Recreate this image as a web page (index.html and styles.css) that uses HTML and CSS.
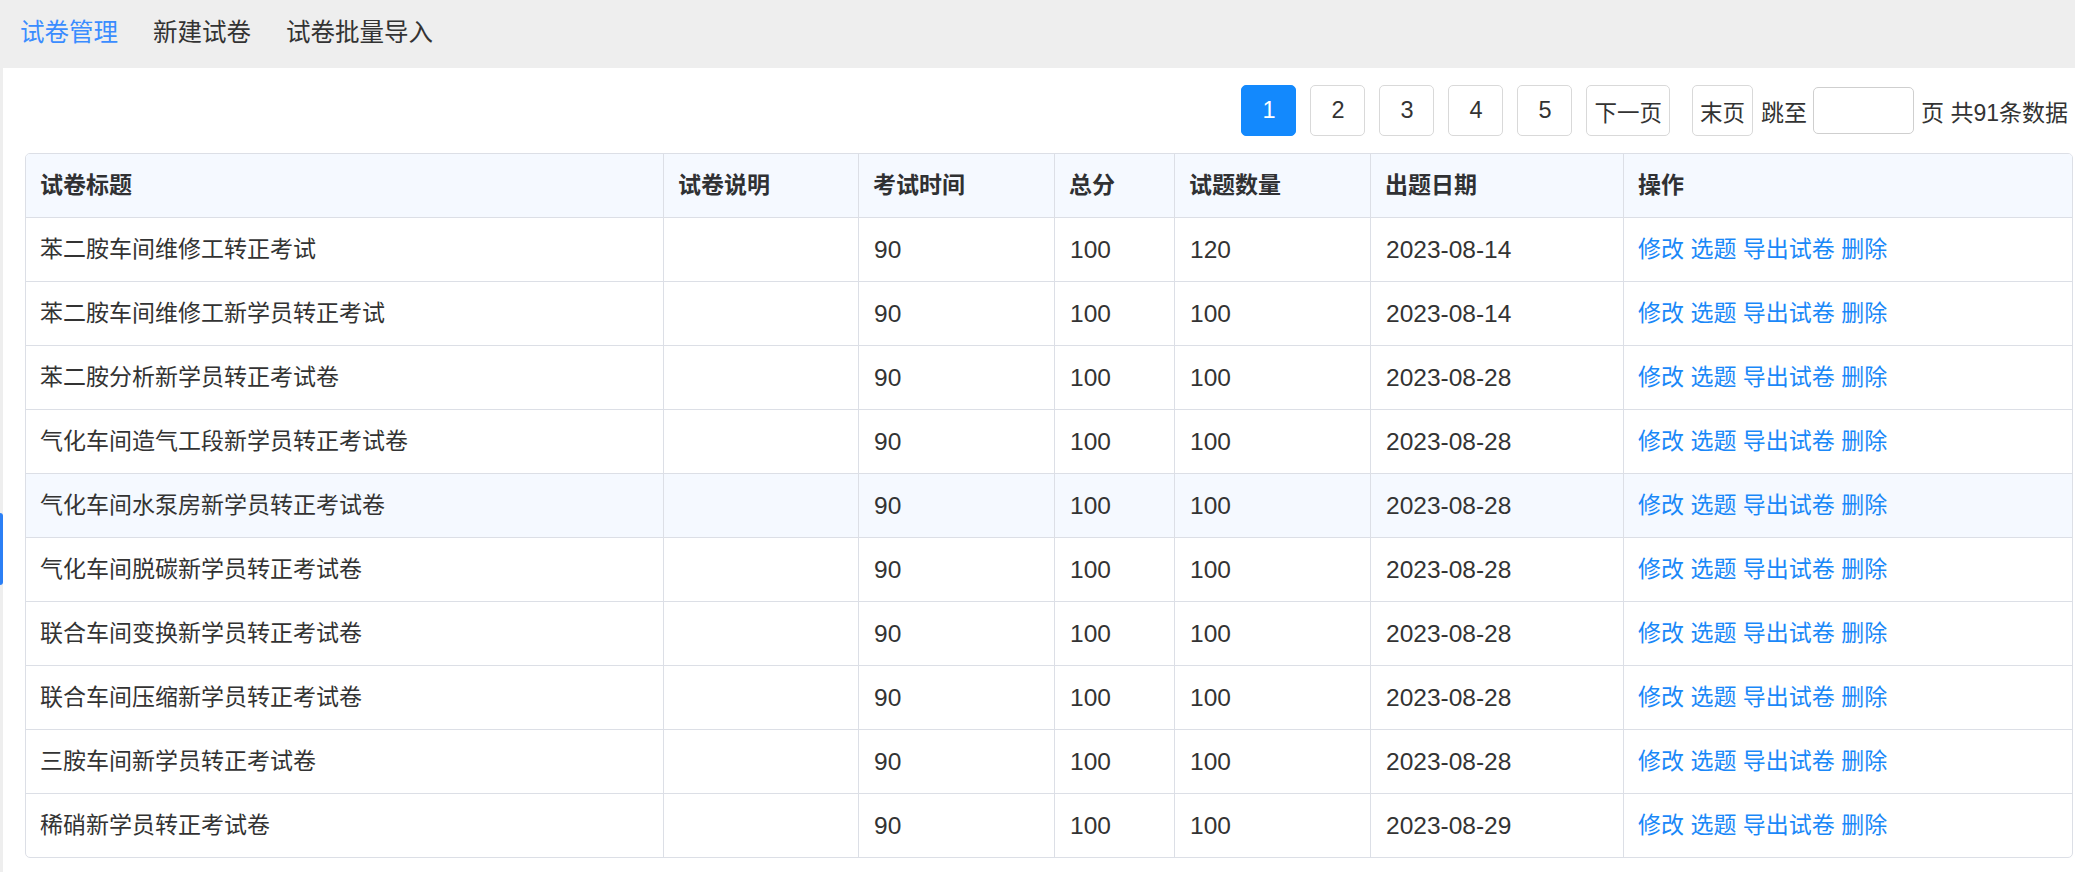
FILE: index.html
```html
<!DOCTYPE html>
<html lang="zh-CN">
<head>
<meta charset="utf-8">
<title>试卷管理</title>
<link rel="stylesheet" href="styles.css">
</head>
<body>
<div class="topbar">
  <a class="nav-item active">试卷管理</a>
  <a class="nav-item">新建试卷</a>
  <a class="nav-item">试卷批量导入</a>
</div>
<div class="side-tab"></div>
<div class="main">
  <div class="pager">
    <span class="pbtn num current">1</span>
    <span class="pbtn num">2</span>
    <span class="pbtn num">3</span>
    <span class="pbtn num">4</span>
    <span class="pbtn num">5</span>
    <span class="pbtn txt">下一页</span>
    <span class="pbtn txt last">末页</span>
    <span class="plabel">跳至</span>
    <input class="pinput" type="text">
    <span class="ptotal">页 共91条数据</span>
  </div>
  <div class="table-wrap">
    <table class="grid">
      <colgroup>
        <col class="c1"><col class="c2"><col class="c3"><col class="c4"><col class="c5"><col class="c6"><col class="c7">
      </colgroup>
      <thead>
        <tr><th>试卷标题</th><th>试卷说明</th><th>考试时间</th><th>总分</th><th>试题数量</th><th>出题日期</th><th>操作</th></tr>
      </thead>
      <tbody>
        <tr><td>苯二胺车间维修工转正考试</td><td></td><td class="n">90</td><td class="n">100</td><td class="n">120</td><td class="n">2023-08-14</td><td class="ops"><a>修改</a> <a>选题</a> <a>导出试卷</a> <a>删除</a></td></tr>
        <tr><td>苯二胺车间维修工新学员转正考试</td><td></td><td class="n">90</td><td class="n">100</td><td class="n">100</td><td class="n">2023-08-14</td><td class="ops"><a>修改</a> <a>选题</a> <a>导出试卷</a> <a>删除</a></td></tr>
        <tr><td>苯二胺分析新学员转正考试卷</td><td></td><td class="n">90</td><td class="n">100</td><td class="n">100</td><td class="n">2023-08-28</td><td class="ops"><a>修改</a> <a>选题</a> <a>导出试卷</a> <a>删除</a></td></tr>
        <tr><td>气化车间造气工段新学员转正考试卷</td><td></td><td class="n">90</td><td class="n">100</td><td class="n">100</td><td class="n">2023-08-28</td><td class="ops"><a>修改</a> <a>选题</a> <a>导出试卷</a> <a>删除</a></td></tr>
        <tr class="hover"><td>气化车间水泵房新学员转正考试卷</td><td></td><td class="n">90</td><td class="n">100</td><td class="n">100</td><td class="n">2023-08-28</td><td class="ops"><a>修改</a> <a>选题</a> <a>导出试卷</a> <a>删除</a></td></tr>
        <tr><td>气化车间脱碳新学员转正考试卷</td><td></td><td class="n">90</td><td class="n">100</td><td class="n">100</td><td class="n">2023-08-28</td><td class="ops"><a>修改</a> <a>选题</a> <a>导出试卷</a> <a>删除</a></td></tr>
        <tr><td>联合车间变换新学员转正考试卷</td><td></td><td class="n">90</td><td class="n">100</td><td class="n">100</td><td class="n">2023-08-28</td><td class="ops"><a>修改</a> <a>选题</a> <a>导出试卷</a> <a>删除</a></td></tr>
        <tr><td>联合车间压缩新学员转正考试卷</td><td></td><td class="n">90</td><td class="n">100</td><td class="n">100</td><td class="n">2023-08-28</td><td class="ops"><a>修改</a> <a>选题</a> <a>导出试卷</a> <a>删除</a></td></tr>
        <tr><td>三胺车间新学员转正考试卷</td><td></td><td class="n">90</td><td class="n">100</td><td class="n">100</td><td class="n">2023-08-28</td><td class="ops"><a>修改</a> <a>选题</a> <a>导出试卷</a> <a>删除</a></td></tr>
        <tr><td>稀硝新学员转正考试卷</td><td></td><td class="n">90</td><td class="n">100</td><td class="n">100</td><td class="n">2023-08-29</td><td class="ops"><a>修改</a> <a>选题</a> <a>导出试卷</a> <a>删除</a></td></tr>
      </tbody>
    </table>
  </div>
</div>
</body>
</html>
```

FILE: styles.css
```css
html, body {
  margin: 0;
  padding: 0;
  height: 100%;
  overflow: hidden;
}
body {
  background: #eeeeee;
  font-family: "Liberation Sans", "Noto Sans CJK SC", sans-serif;
  color: #333333;
  font-size: 23px;
}
.topbar {
  height: 68px;
  background: #eeeeee;
  display: flex;
  align-items: center;
  padding-left: 20px;
  box-sizing: border-box;
}
.nav-item {
  font-size: 24.5px;
  line-height: 1;
  color: #333333;
  margin-right: 35px;
  padding-bottom: 1px;
  cursor: pointer;
}
.nav-item.active {
  color: #3a8cff;
}
.side-tab {
  position: absolute;
  left: 0;
  top: 513px;
  width: 3px;
  height: 72px;
  background: #2b7ff5;
  border-radius: 0 3px 3px 0;
}
.main {
  margin-left: 3px;
  background: #ffffff;
  height: 804px;
  box-sizing: border-box;
  padding-top: 17px;
}
.pager {
  display: flex;
  justify-content: flex-end;
  align-items: center;
  padding-right: 7px;
  height: 51px;
}
.pbtn {
  box-sizing: border-box;
  height: 51px;
  display: inline-flex;
  align-items: center;
  justify-content: center;
  border: 1px solid #d9d9d9;
  border-radius: 5px;
  color: #333333;
  font-size: 22.5px;
  margin-left: 14px;
  background: #ffffff;
}
.pbtn.num {
  width: 55px;
  font-size: 23.5px;
}
.pbtn.txt {
  padding: 0 7px;
}
.pbtn.last {
  margin-left: 22px;
}
.pbtn.current {
  background: #1389fd;
  border-color: #1389fd;
  color: #ffffff;
}
.plabel {
  margin-left: 8px;
}
.pinput {
  box-sizing: border-box;
  width: 101px;
  height: 47px;
  margin: 0 0 0 6px;
  border: 1px solid #cfcfcf;
  border-radius: 5px;
  padding: 0 6px;
  font: inherit;
  outline: none;
}
.ptotal {
  margin-left: 7px;
}
.table-wrap {
  margin: 17px 2px 0 22px;
  border: 1px solid #dcdfe6;
  border-radius: 5px;
  overflow: hidden;
}
.grid {
  width: 100%;
  border-collapse: separate;
  border-spacing: 0;
  table-layout: fixed;
}
.c1 { width: 638px; }
.c2 { width: 195px; }
.c3 { width: 196px; }
.c4 { width: 120px; }
.c5 { width: 196px; }
.c6 { width: 253px; }
.c7 { width: 448px; }
.grid tr {
  height: 64px;
}
.grid tbody tr:last-child {
  height: 63px;
}
.grid th,
.grid td {
  padding: 0 14px;
  text-align: left;
  vertical-align: middle;
  border-right: 1px solid #dcdfe6;
  border-bottom: 1px solid #dcdfe6;
  white-space: nowrap;
  overflow: hidden;
  line-height: 1.2;
}
.grid th:last-child,
.grid td:last-child {
  border-right: none;
}
.grid tbody tr:last-child td {
  border-bottom: none;
}
.grid thead th {
  background: #f5f9ff;
  font-weight: bold;
  color: #303133;
}
.grid tbody td {
  color: #333333;
}
.grid tbody td.n {
  font-size: 24.5px;
  padding-left: 15px;
}
.grid tr.hover td {
  background: #f5f9ff;
}
.ops a {
  color: #1a88f8;
  cursor: pointer;
}
```
